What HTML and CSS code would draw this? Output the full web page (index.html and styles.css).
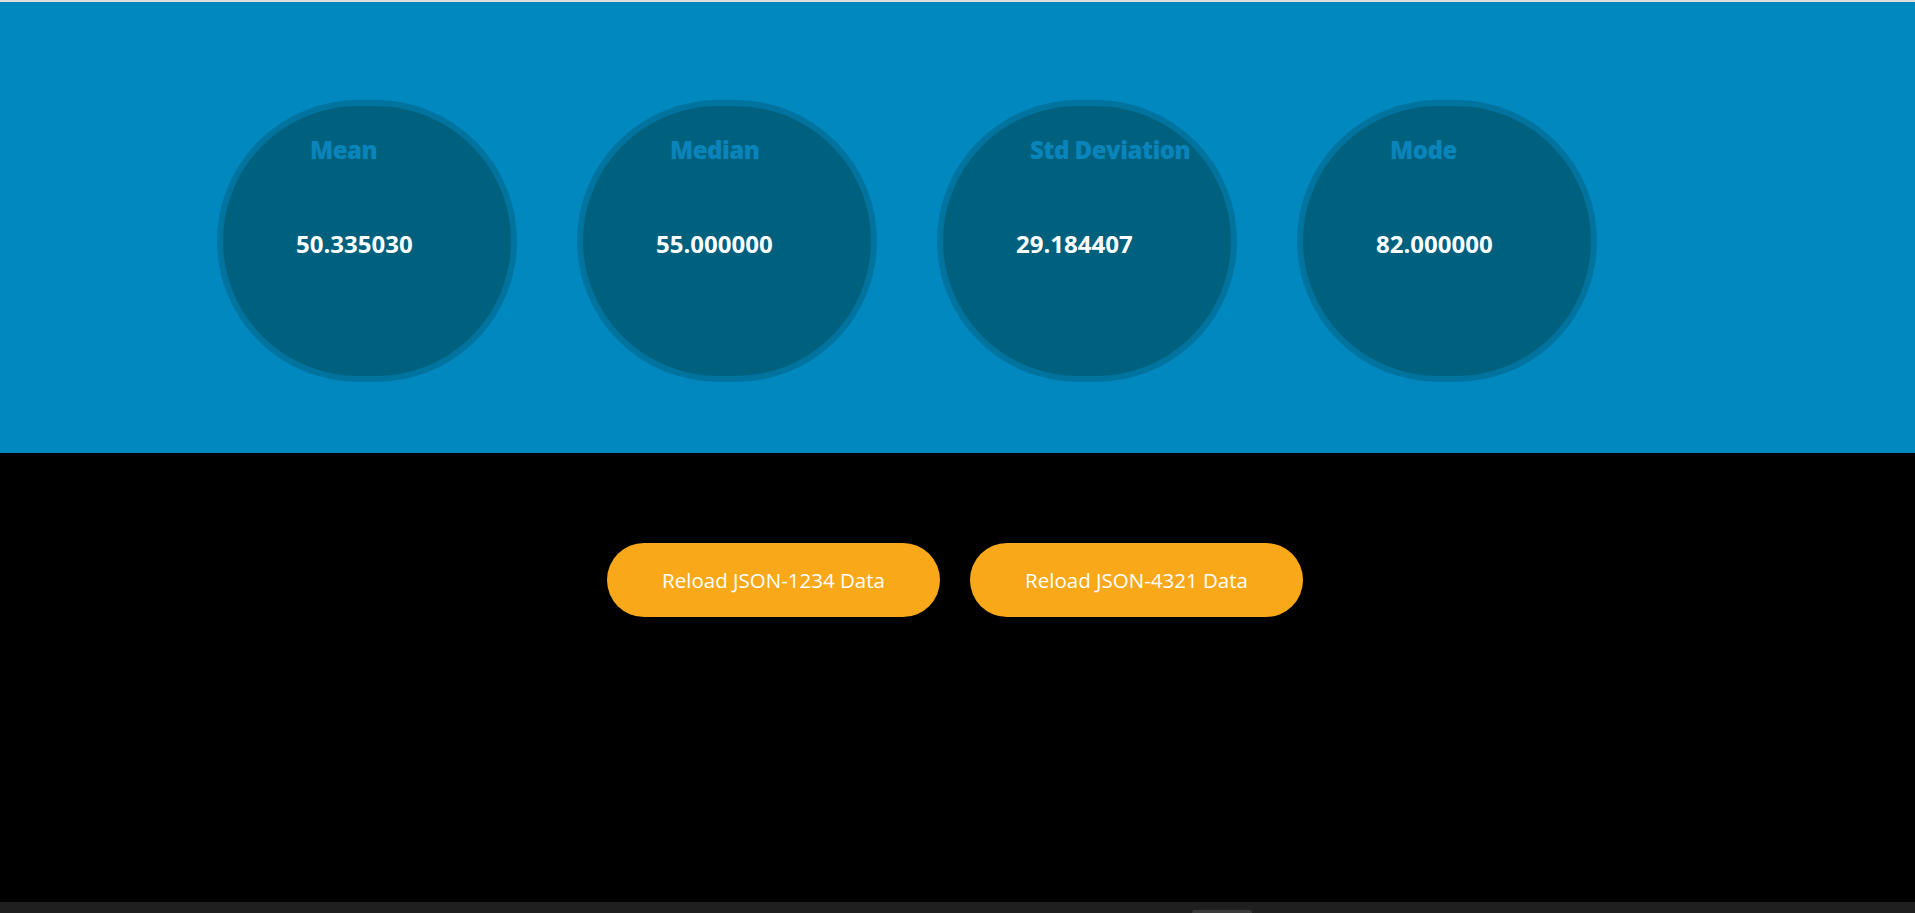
FILE: index.html
```html
<!DOCTYPE html>
<html lang="en">
<head>
<meta charset="utf-8">
<title>Stats</title>
<link rel="stylesheet" href="styles.css">
</head>
<body>
<div class="topline"></div>
<section class="stats">
  <div class="stat">
    <div class="label">Mean</div>
    <div class="value">50.335030</div>
  </div>
  <div class="stat">
    <div class="label">Median</div>
    <div class="value">55.000000</div>
  </div>
  <div class="stat">
    <div class="label">Std Deviation</div>
    <div class="value">29.184407</div>
  </div>
  <div class="stat">
    <div class="label">Mode</div>
    <div class="value">82.000000</div>
  </div>
</section>
<section class="actions">
  <button class="btn">Reload JSON-1234 Data</button>
  <button class="btn">Reload JSON-4321 Data</button>
</section>
<footer class="bottombar"><div class="tab"></div></footer>
</body>
</html>
```

FILE: styles.css
```css
html, body {
  margin: 0;
  padding: 0;
  background: #000;
  font-family: "Open Sans", "Noto Sans", sans-serif;
  height: 913px;
  overflow: hidden;
}
.topline {
  height: 2px;
  background: #dedede;
}
.stats {
  height: 451px;
  box-sizing: border-box;
  background: #0088bf;
  padding: 98px 0 0 217px;
  display: flex;
  gap: 60px;
  align-items: flex-start;
}
.stat {
  width: 300px;
  height: 282px;
  box-sizing: border-box;
  border: 6px solid #00749f;
  border-radius: 300px;
  background: #00617f;
  padding-top: 32px;
}
.label {
  margin-left: 87px;
  font-size: 24px;
  line-height: 24px;
  font-weight: 800;
  letter-spacing: -0.5px;
  color: #0a85bb;
}
.value {
  margin-top: 70px;
  margin-left: 73px;
  font-size: 24px;
  line-height: 24px;
  font-weight: 700;
  color: #fff;
}
.actions {
  height: 449px;
  box-sizing: border-box;
  padding-top: 90px;
  display: flex;
  justify-content: center;
  align-items: flex-start;
  gap: 30px;
  padding-right: 5px;
}
.btn {
  width: 333px;
  height: 74px;
  border: none;
  border-radius: 37px;
  background: #f9a81a;
  color: #fff;
  font-family: "Open Sans", "Noto Sans", sans-serif;
  font-size: 20.5px;
  padding: 0;
}
.bottombar {
  height: 11px;
  background: #1f1f1f;
  display: flex;
  justify-content: flex-start;
  align-items: flex-end;
  padding-left: 1192px;
}
.tab {
  width: 60px;
  height: 3px;
  background: #3a3a3a;
  border-radius: 3px 3px 0 0;
}
```
